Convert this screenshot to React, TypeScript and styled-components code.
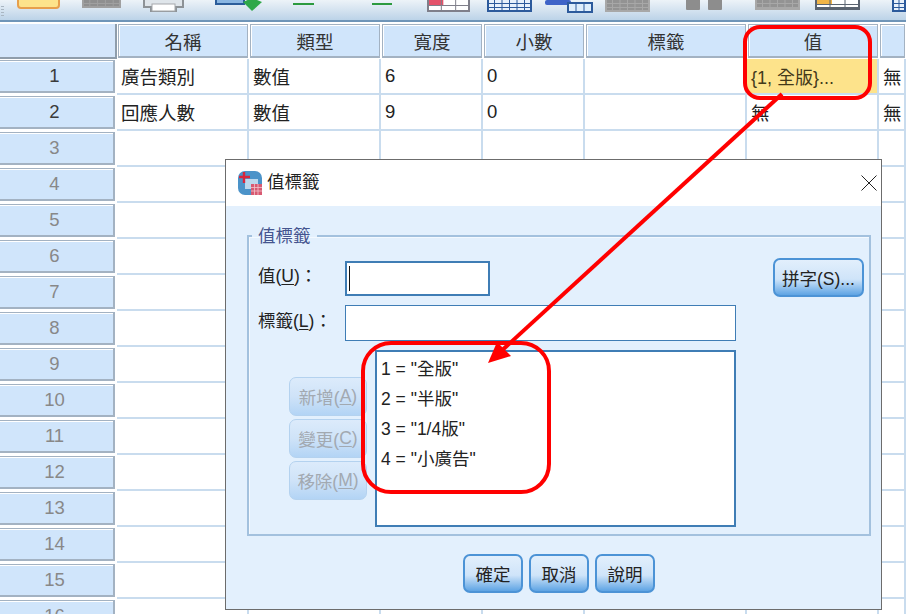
import styled, { createGlobalStyle, css } from "styled-components";
import type { ReactNode } from "react";

const FONT = `"Liberation Sans", "Noto Sans CJK TC", sans-serif`;

const columns = [
  { title: "名稱", key: "name" },
  { title: "類型", key: "type" },
  { title: "寬度", key: "width" },
  { title: "小數", key: "dec" },
  { title: "標籤", key: "label" },
  { title: "值", key: "values" },
  { title: "", key: "missing" },
];

const rows: Record<string, string>[] = [
  { name: "廣告類別", type: "數值", width: "6", dec: "0", label: "", values: "{1, 全版}...", missing: "無" },
  { name: "回應人數", type: "數值", width: "9", dec: "0", label: "", values: "無", missing: "無" },
  ...Array.from({ length: 14 }, () => ({})),
];

const valueLabels = ['1 = "全版"', '2 = "半版"', '3 = "1/4版"', '4 = "小廣告"'];

const GlobalStyle = createGlobalStyle`
  html, body {
    margin: 0;
    padding: 0;
    background: #fff;
    overflow: hidden;
  }
  * {
    box-sizing: border-box;
  }
`;

type GridIconProps = { w: number; h: number; color: string; fill?: string; head?: string; cell?: number; rowGap?: number };

const GridIcon = ({ w, h, color, fill = "#fff", head, cell = 7, rowGap = 4 }: GridIconProps) => {
  const cols = Math.floor(w / cell);
  const lines = Math.floor(h / rowGap);
  return (
    <svg width={w} height={h} viewBox={`0 0 ${w} ${h}`}>
      <rect x="1" y="-3" width={w - 2} height={h + 1} fill={fill} stroke={color} strokeWidth="2" />
      {head && <rect x="2" y="0" width={w / 3} height="5" fill={head} />}
      {Array.from({ length: cols - 1 }, (_, i) => (
        <line key={i} x1={((i + 1) * w) / cols} x2={((i + 1) * w) / cols} y1="0" y2={h - 1} stroke={color} />
      ))}
      {Array.from({ length: lines }, (_, i) => (
        <line key={i} x1="0" x2={w} y1={(i + 1) * rowGap - 0.5} y2={(i + 1) * rowGap - 0.5} stroke={color} />
      ))}
    </svg>
  );
};

const toolbarItems: { gap: number; node: ReactNode }[] = [
  {
    gap: 17,
    node: (
      <svg width="43" height="10" viewBox="0 0 43 10">
        <path d="M1 -3V5Q1 8 4 8H39Q42 8 42 5V-3Z" fill="#fde38b" stroke="#e79f4c" strokeWidth="2" />
      </svg>
    ),
  },
  { gap: 22, node: <GridIcon w={39} h={9} color="#a0a0a0" fill="#8f8f8f" /> },
  {
    gap: 22,
    node: (
      <svg width="41" height="13" viewBox="0 0 41 13">
        <path d="M1 -2H40V7H33V11H8V7H1Z" fill="#dfe5ea" stroke="#8d9296" strokeWidth="2" />
        <rect x="9" y="4" width="23" height="7" fill="#fff" stroke="#a5a8ab" />
      </svg>
    ),
  },
  {
    gap: 31,
    node: (
      <svg width="47" height="12" viewBox="0 0 47 12">
        <rect x="1" y="-3" width="28" height="7" fill="#8ab6e2" stroke="#2c5d9a" strokeWidth="2" />
        <path d="M37 -2L47 2L37 11L28 2Z" fill="#2fa84a" />
      </svg>
    ),
  },
  {
    gap: 31,
    node: (
      <svg width="21" height="2" viewBox="0 0 21 2">
        <rect width="21" height="2" fill="#2c9a3f" />
      </svg>
    ),
  },
  {
    gap: 58,
    node: (
      <svg width="20" height="2" viewBox="0 0 20 2">
        <rect width="20" height="2" fill="#2c9a3f" />
      </svg>
    ),
  },
  { gap: 35, node: <GridIcon w={43} h={13} color="#7f7f8a" head="#e4526a" cell={14} rowGap={6} /> },
  { gap: 17, node: <GridIcon w={45} h={13} color="#2c5a9c" fill="#e8f1fb" /> },
  {
    gap: 13,
    node: (
      <svg width="48" height="13" viewBox="0 0 48 13">
        <rect x="0" y="0" width="26" height="5" rx="2" fill="#3e63c8" />
        <rect x="23" y="3" width="24" height="9" fill="#dfeefc" stroke="#2c5a9c" strokeWidth="2" />
        <line x1="31" x2="31" y1="3" y2="12" stroke="#2c5a9c" />
        <line x1="39" x2="39" y1="3" y2="12" stroke="#2c5a9c" />
      </svg>
    ),
  },
  { gap: 12, node: <GridIcon w={45} h={13} color="#a8a8a8" fill="#939393" /> },
  {
    gap: 36,
    node: (
      <svg width="36" height="10" viewBox="0 0 36 10">
        <rect x="0" y="-2" width="14" height="12" rx="1" fill="#8d8d8d" />
        <rect x="22" y="-2" width="14" height="12" rx="1" fill="#8d8d8d" />
      </svg>
    ),
  },
  { gap: 33, node: <GridIcon w={45} h={11} color="#a8a8a8" fill="#939393" /> },
  { gap: 15, node: <GridIcon w={45} h={10} color="#5b6470" head="#f1b548" cell={14} rowGap={5} /> },
  { gap: 32, node: <GridIcon w={14} h={13} color="#2c5a9c" fill="#e8f1fb" /> },
];

const App = () => {
  return (
    <Page>
      <GlobalStyle />
      <Toolbar>
        <Grip />
        {toolbarItems.map((item, i) => (
          <ToolSlot key={i} $gap={item.gap}>
            {item.node}
          </ToolSlot>
        ))}
      </Toolbar>

      <Sheet>
        <Corner />
        {columns.map((col) => (
          <ColumnHead key={col.key}>{col.title}</ColumnHead>
        ))}
        {rows.map((row, r) => (
          <Row key={r}>
            <RowHead $active={r < 2}>{r + 1}</RowHead>
            {columns.map((col) => (
              <Cell key={col.key} $selected={r === 0 && col.key === "values"}>
                {row[col.key]}
              </Cell>
            ))}
          </Row>
        ))}
      </Sheet>

      <Dialog>
        <TitleBar>
          <svg width="25" height="25" viewBox="0 0 25 25">
            <rect x="0" y="0" width="24" height="24" rx="7" fill="#4b93c9" />
            <rect x="7" y="8" width="13" height="10" fill="#bcd9ee" />
            <path d="M6 1V12M1 6H12" stroke="#d8263c" strokeWidth="2.4" />
            <rect x="13" y="13" width="11" height="11" fill="#d85a72" />
            <path d="M13 16.5H24M13 20H24M16.5 13V24M20 13V24" stroke="#f1c3cc" strokeWidth="0.8" />
          </svg>
          <DialogTitle>值標籤</DialogTitle>
          <svg width="16" height="16" viewBox="0 0 16 16">
            <path d="M0.5 0.5L15.5 15.5M15.5 0.5L0.5 15.5" stroke="#222" strokeWidth="1" />
          </svg>
        </TitleBar>
        <DialogBody>
          <Group>
            <GroupLegend>值標籤</GroupLegend>
            <FormRow>
              <FieldLabel>
                值(<u>U</u>)：
              </FieldLabel>
              <TextBox $width={145} $height={35} $focused>
                <Caret />
              </TextBox>
              <SpellButton>拼字(S)...</SpellButton>
            </FormRow>
            <FormRow>
              <FieldLabel>
                標籤(<u>L</u>)：
              </FieldLabel>
              <TextBox $width={391} $height={36} />
            </FormRow>
            <ListRow>
              <SideButtons>
                <DialogButton disabled>
                  新增(<u>A</u>)
                </DialogButton>
                <DialogButton disabled>
                  變更(<u>C</u>)
                </DialogButton>
                <DialogButton disabled>
                  移除(<u>M</u>)
                </DialogButton>
              </SideButtons>
              <ValueList>
                {valueLabels.map((v) => (
                  <ValueItem key={v}>{v}</ValueItem>
                ))}
              </ValueList>
            </ListRow>
          </Group>
          <Footer>
            <FooterButton>確定</FooterButton>
            <FooterButton>取消</FooterButton>
            <FooterButton>說明</FooterButton>
          </Footer>
        </DialogBody>
      </Dialog>

      <Annotations width="906" height="614" viewBox="0 0 906 614">
        <rect x="745" y="27" width="125" height="71" rx="15" fill="none" stroke="#f00" strokeWidth="4" />
        <rect x="363" y="343" width="186" height="149" rx="28" fill="none" stroke="#f00" strokeWidth="4" />
        <line x1="782" y1="94" x2="498" y2="354" stroke="#f00" strokeWidth="4" />
        <path d="M488 363L511 356L497 342Z" fill="#f00" />
      </Annotations>
    </Page>
  );
};

export default App;

const Page = styled.div`
  position: relative;
  width: 906px;
  height: 614px;
  overflow: hidden;
  background: #fff;
  font-family: ${FONT};
  color: #222;
`;

const Toolbar = styled.div`
  position: relative;
  display: flex;
  align-items: flex-start;
  height: 24px;
  background: linear-gradient(#edf3f8 0, #bcd3e8 20px, #6f95b8 20px, #6f95b8 22px, #fff 22px);
`;

const Grip = styled.div`
  position: absolute;
  left: 1px;
  top: 6px;
  width: 3px;
  height: 11px;
  background: repeating-linear-gradient(#a9b6c2 0 1px, transparent 1px 3px);
`;

const ToolSlot = styled.div<{ $gap: number }>`
  margin-left: ${(p) => p.$gap}px;
  line-height: 0;
  flex: none;
`;

const Sheet = styled.div`
  display: grid;
  grid-template-columns: 117px 132px 132px 102px 102px 162px 132px 27px;
  grid-auto-rows: 36px;
  grid-template-rows: 35px;
`;

const Row = styled.div`
  display: contents;
`;

const Corner = styled.div`
  background: #d4e6fb;
  border-right: 2px solid #8f9dab;
  border-bottom: 2px solid #8f9dab;
`;

const ColumnHead = styled.div`
  display: flex;
  align-items: center;
  justify-content: center;
  margin-left: 1px;
  margin-right: 1px;
  margin-bottom: 1px;
  background: #d0e5fb;
  border: 1px solid #a3b2c2;
  border-bottom-width: 2px;
  box-shadow: inset 1px 1px 0 #fff;
  font-size: 18.5px;
  color: #333;
`;

const RowHead = styled.div<{ $active: boolean }>`
  display: flex;
  align-items: center;
  justify-content: center;
  margin: 1px 2px 2px 0;
  padding-right: 4px;
  background: #d0e5fb;
  border: 1px solid #a3b2c2;
  border-left: none;
  border-bottom-width: 2px;
  border-right-width: 2px;
  box-shadow: inset 0 1px 0 #fff;
  font-size: 18.5px;
  color: ${(p) => (p.$active ? "#3a3a3a" : "#888")};
`;

const Cell = styled.div<{ $selected: boolean }>`
  display: flex;
  align-items: center;
  padding-left: 4px;
  border-right: 2px solid #c9dcee;
  border-bottom: 2px solid #c9dcee;
  font-size: 18.5px;
  white-space: nowrap;
  overflow: hidden;
  color: #222;
  ${(p) =>
    p.$selected &&
    css`
      background: #fde38b;
      color: #43391a;
      font-size: 18px;
    `}
`;

const Dialog = styled.div`
  position: absolute;
  left: 225px;
  top: 159px;
  width: 657px;
  height: 451px;
  display: flex;
  flex-direction: column;
  border: 1px solid #6c6c6c;
  background: #e3f0fd;
`;

const TitleBar = styled.div`
  display: flex;
  align-items: center;
  height: 46px;
  padding: 0 4px 0 12px;
  background: #fff;
`;

const DialogTitle = styled.div`
  flex: 1;
  margin-left: 4px;
  padding-bottom: 5px;
  font-size: 17.5px;
  color: #222;
`;

const DialogBody = styled.div`
  flex: 1;
  padding: 20px 10px 0 21px;
`;

const Group = styled.fieldset`
  margin: 0;
  padding: 0 0 8px;
  height: 310px;
  border: 2px solid #a3c1de;
  box-shadow: inset 1px 1px 0 #f3f9ff;
`;

const GroupLegend = styled.legend`
  margin-left: 3px;
  padding: 0 6px;
  height: 20px;
  line-height: 20px;
  font-size: 17.5px;
  color: #45558f;
`;

const FormRow = styled.div`
  display: flex;
  align-items: center;
  min-height: 36px;
  margin-top: 8px;

  &:first-of-type {
    margin-top: 14px;
  }
`;

const FieldLabel = styled.div`
  width: 96px;
  padding-left: 9px;
  padding-bottom: 8px;
  font-size: 17.5px;
  color: #222;
  flex: none;
  white-space: nowrap;

  u {
    text-underline-offset: 2px;
  }
`;

const TextBox = styled.div<{ $width: number; $height: number; $focused?: boolean }>`
  display: flex;
  align-items: center;
  width: ${(p) => p.$width}px;
  height: ${(p) => p.$height}px;
  padding-left: 2px;
  background: #fff;
  border: ${(p) => (p.$focused ? "2px solid #3f7db5" : "1px solid #3f7db5")};
`;

const Caret = styled.span`
  width: 1px;
  height: 25px;
  background: #111;
`;

const buttonBase = css`
  display: flex;
  align-items: center;
  justify-content: center;
  height: 39px;
  padding: 0;
  border-radius: 7px;
  font-family: ${FONT};
  font-size: 17.5px;
  white-space: nowrap;
`;

const SpellButton = styled.button`
  ${buttonBase}
  width: 91px;
  margin-left: 283px;
  margin-top: -2px;
  border: 2px solid #4c93d6;
  background: linear-gradient(#e2effc, #cfe4f9 55%, #5ea4e4);
  color: #222;
`;

const ListRow = styled.div`
  display: flex;
  align-items: flex-start;
  gap: 8px;
  margin-top: 9px;
  padding-left: 40px;
`;

const SideButtons = styled.div`
  display: flex;
  flex-direction: column;
  gap: 3px;
  width: 78px;
  padding-top: 27px;
`;

const DialogButton = styled.button`
  ${buttonBase}
  border: 1px solid #b4d2ef;
  background: linear-gradient(#dcebfb, #cfe3f8 50%, #b3d4f5);
  color: #a2a9b1;

  u {
    text-underline-offset: 2px;
  }
`;

const ValueList = styled.div`
  width: 361px;
  height: 177px;
  padding: 2px 0 0 4px;
  background: #fff;
  border: 2px solid #3f7db5;
`;

const ValueItem = styled.div`
  height: 30px;
  line-height: 30px;
  font-size: 17.5px;
  color: #222;
  white-space: nowrap;
`;

const Footer = styled.div`
  display: flex;
  justify-content: center;
  gap: 6px;
  margin-top: 18px;
`;

const FooterButton = styled.button`
  ${buttonBase}
  width: 60px;
  border: 2px solid #4c93d6;
  background: linear-gradient(#e2effc, #cfe4f9 55%, #5ea4e4);
  color: #222;
`;

const Annotations = styled.svg`
  position: absolute;
  left: 0;
  top: 0;
  pointer-events: none;
`;
